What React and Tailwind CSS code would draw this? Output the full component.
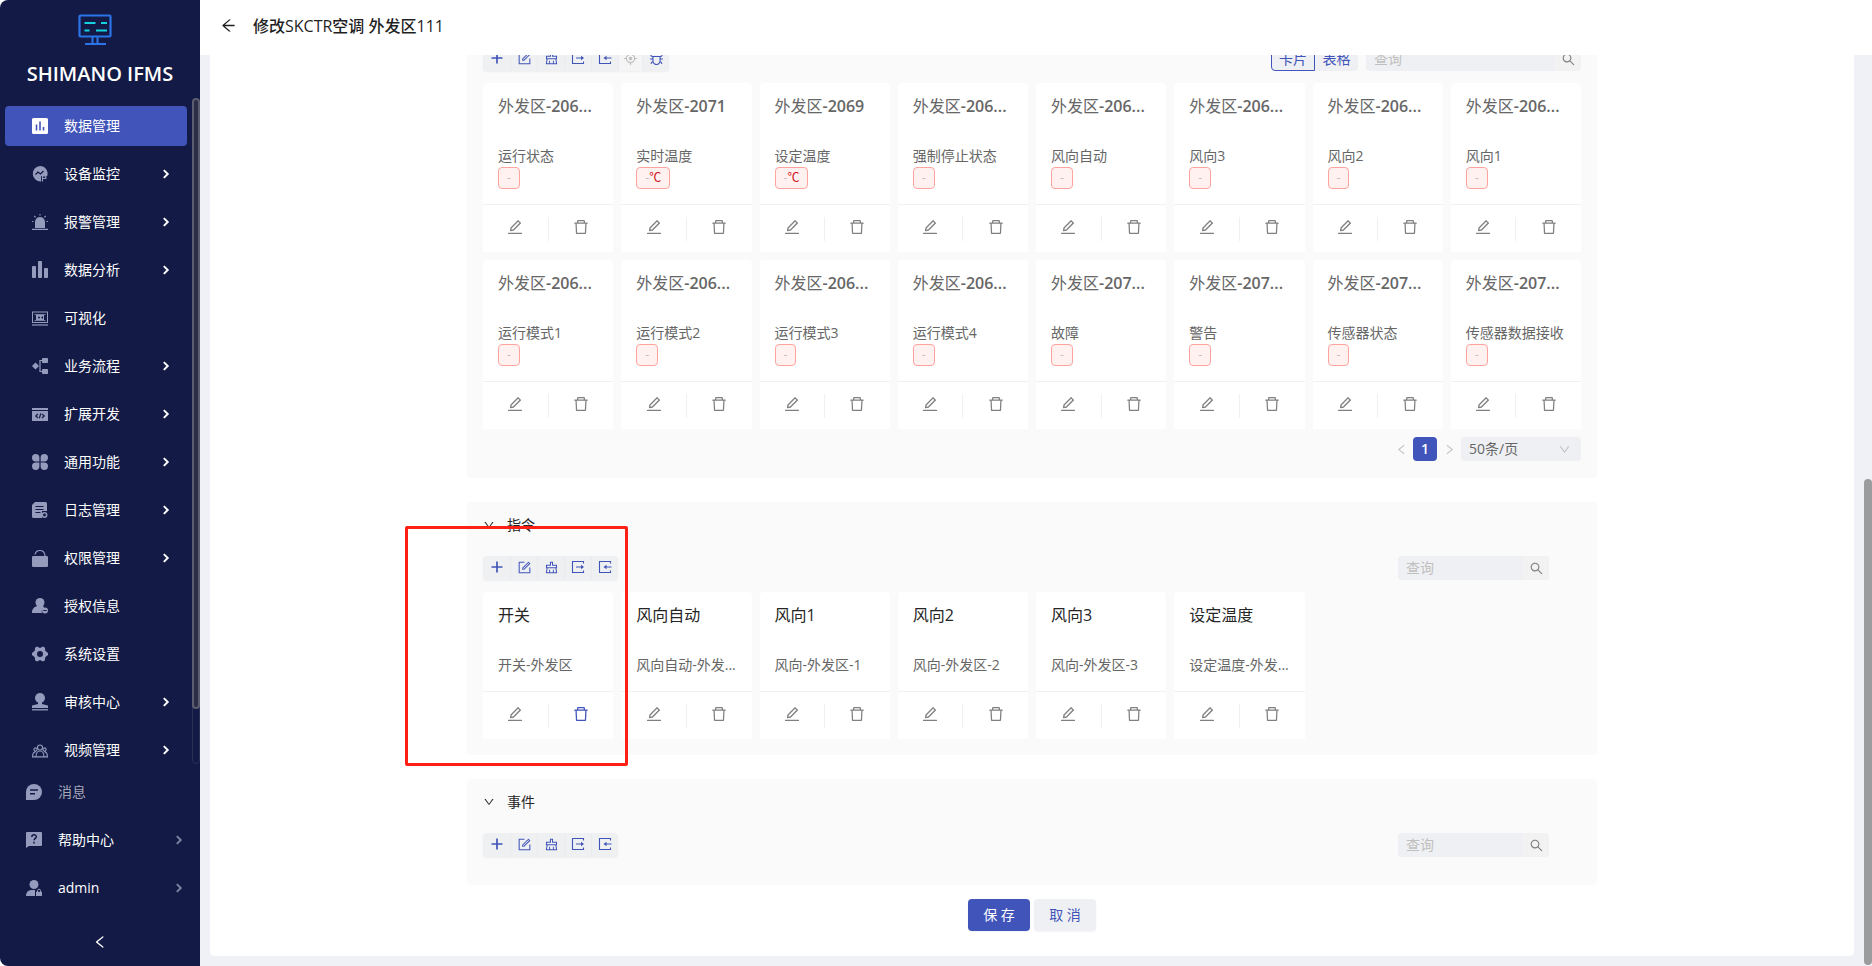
import React from 'react';
import {
  AiOutlineAim,
  AiOutlineArrowLeft,
  AiOutlineBug,
  AiOutlineClear,
  AiOutlineDelete,
  AiOutlineDown,
  AiOutlineEdit,
  AiOutlineForm,
  AiOutlineLeft,
  AiOutlineRight,
  AiOutlineSearch,
} from 'react-icons/ai';

const Icon = ({ children, className = 'size-4' }) => (
  <svg viewBox="0 0 16 16" className={`shrink-0 ${className}`} fill="currentColor" aria-hidden="true">
    {children}
  </svg>
);

const PlusIcon = () => (
  <svg viewBox="0 0 14 14" className="size-3.5" stroke="currentColor" strokeWidth="1.700" aria-hidden="true">
    <path d="M7 1.500v11M1.500 7h11" />
  </svg>
);

const ExportIcon = () => (
  <svg viewBox="0 0 14 14" className="size-3.5" fill="none" stroke="currentColor" aria-hidden="true">
    <path d="M12.500 3.500v-2h-11v11h11v-2" strokeWidth="1.100" />
    <path d="M5 7h6" />
    <path d="M10 4.800 13 7l-3 2.200z" fill="currentColor" stroke="none" />
  </svg>
);

const ImportIcon = () => (
  <svg viewBox="0 0 14 14" className="size-3.5" fill="none" stroke="currentColor" aria-hidden="true">
    <path d="M12.500 3.500v-2h-11v11h11v-2" strokeWidth="1.100" />
    <path d="M7.500 7h6" />
    <path d="M8.500 4.800 5.500 7l3 2.200z" fill="currentColor" stroke="none" />
  </svg>
);

const DARK = '#121a45';

const icons = {
  data: (
    <>
      <rect width="16" height="16" rx="1.5" />
      <path d="M4.500 6.500v6M8 3.500v9M11.500 9v3.500" stroke="#4154b9" strokeWidth="1.600" />
    </>
  ),
  monitor: (
    <>
      <path d="M8 0a7.500 7.500 0 1 0 1 15.400V10h6.200A7.600 7.600 0 0 0 8 0z" />
      <path d="M3.500 8.500 6 6l2.500 2 3-3" stroke={DARK} strokeWidth="1.300" fill="none" />
      <path d="M10.500 15.500V9.800h3.300v2.700h-3" stroke="currentColor" strokeWidth="1.200" fill="none" />
    </>
  ),
  alarm: (
    <>
      <path d="M3 14V8a5 5 0 0 1 10 0v6z" />
      <path d="M0 15.400h16M8 0v1.600M2.300 2l1.300 1.300M13.700 2l-1.300 1.300M0 7.500h1.500M14.500 7.500H16" stroke="currentColor" strokeWidth="1.100" />
    </>
  ),
  analysis: (
    <>
      <rect x="0" y="4" width="4" height="12" rx=".8" />
      <rect x="6" y="-1" width="4" height="17" rx=".8" />
      <rect x="12" y="6" width="4" height="10" rx=".8" />
    </>
  ),
  visual: (
    <>
      <rect x=".5" y="2" width="15" height="10.500" fill="none" stroke="currentColor" />
      <path d="M0 15h16" stroke="currentColor" strokeWidth="1.200" />
      <path d="M2.500 4.500h11M2.500 10.500h11" stroke="currentColor" strokeWidth=".8" />
      <rect x="4" y="5" width="8" height="5" />
      <circle cx="7" cy="7.500" r="1" fill={DARK} />
      <path d="m11 6-2 1.500L11 9z" fill={DARK} />
    </>
  ),
  flow: (
    <>
      <path d="M0 8l3.500-3.500L7 8l-3.500 3.500z" />
      <path d="M11 2.500H8v11h3" stroke="currentColor" strokeWidth="1.200" fill="none" />
      <rect x="10" y="0" width="6" height="5" rx=".8" />
      <rect x="10" y="11" width="6" height="5" rx=".8" />
    </>
  ),
  dev: (
    <>
      <rect y="2" width="16" height="2" />
      <rect y="5" width="16" height="10" />
      <path d="M6 7.800 3.800 10 6 12M10 7.800l2.200 2.200L10 12M8.800 7.500l-1.500 4.700" stroke={DARK} fill="none" strokeWidth="1.200" />
    </>
  ),
  common: (
    <>
      <path d="M3.700 0a3.700 3.700 0 0 1 3.700 3.700v3.700H3.700a3.700 3.700 0 0 1 0-7.400z" />
      <path d="M12.300 0a3.700 3.700 0 0 1 0 7.400H8.600V3.700A3.700 3.700 0 0 1 12.300 0z" />
      <path d="M3.700 16a3.700 3.700 0 0 1 0-7.400h3.700v3.700A3.700 3.700 0 0 1 3.700 16z" />
      <path d="M12.300 16a3.700 3.700 0 0 1-3.700-3.700V8.600h3.700a3.700 3.700 0 0 1 0 7.400z" />
    </>
  ),
  log: (
    <>
      <path d="M3 0h10.500A1.500 1.500 0 0 1 15 1.500V9H10v7H1.500A1.500 1.500 0 0 1 0 14.500V3z" />
      <path d="M3.500 4.500h8M3.500 7.500h8M3.500 10.500h5" stroke={DARK} strokeWidth="1.100" />
      <circle cx="12.500" cy="13" r="2.200" fill="none" stroke="currentColor" strokeWidth="1.500" />
    </>
  ),
  lock: (
    <>
      <rect y="6" width="16" height="11" rx="1.200" />
      <path d="M3 4.500a5 5 0 0 1 9.800 0V6" fill="none" stroke="currentColor" strokeWidth="1.200" />
    </>
  ),
  license: (
    <>
      <circle cx="8" cy="4.500" r="4.500" />
      <path d="M5 7h6l1 3a4 4 0 0 0-2 5H0c0-4 2-6 5-7z" />
      <circle cx="13" cy="12.500" r="3" />
      <path d="M11.300 12.500h3.400" stroke={DARK} />
    </>
  ),
  settings: (
    <path
      fillRule="evenodd"
      d="M5 .5 8 2l3-1.500 2 1.300.2 3L16 7v2l-2.800 2.200-.2 3-2 1.300L8 14l-3 1.500-2-1.300-.200-3L0 9V7l2.800-2.200.2-3zM8 5a3 3 0 1 0 0 6 3 3 0 0 0 0-6z"
    />
  ),
  audit: (
    <>
      <circle cx="8" cy="4" r="5" />
      <path d="M6 7h4v3l6 1.500V14H0v-2.500L6 10z" />
      <path d="M0 15.800h16" stroke="currentColor" strokeWidth="1.300" />
    </>
  ),
  video: (
    <g fill="none" stroke="currentColor" strokeWidth="1.100">
      <circle cx="8" cy="5.500" r="2.500" />
      <circle cx="3.500" cy="7.500" r="1.600" />
      <circle cx="12.500" cy="7.500" r="1.600" />
      <path d="M4 15c0-4 1.500-6 4-6s4 2 4 6zM.600 14.400c0-3 1-4.400 3-4.800M15.400 14.400c0-3-1-4.400-3-4.800M0 14.900h16" />
    </g>
  ),
  message: (
    <>
      <path d="M8 0a8 8 0 1 1 0 16H0V8a8 8 0 0 1 8-8z" />
      <path d="M4 6h8M4 9.800h5" stroke={DARK} strokeWidth="1.400" />
    </>
  ),
  help: (
    <>
      <path d="M1 0h14a1 1 0 0 1 1 1v12a1 1 0 0 1-1 1H3l-3 2V1a1 1 0 0 1 1-1z" />
      <path d="M5.800 5c0-3 4.500-2.800 4.500-.3 0 1.800-2.200 1.700-2.200 3.600M8 9.800v1.700" fill="none" stroke={DARK} strokeWidth="1.500" />
    </>
  ),
  user: (
    <>
      <circle cx="8" cy="4.500" r="4.500" />
      <path d="M0 16c0-4 2.500-6 6-6h3v6z" />
      <path d="M10 11.800h6V16h-6z" />
      <path d="M11.500 12v-1.300a1.500 1.500 0 0 1 3 0V12" fill="none" stroke="currentColor" />
    </>
  ),
  chevron: <path d="M5.500 3.500 10 8l-4.500 4.500" fill="none" stroke="currentColor" strokeWidth="2.200" />,
};

const menu = [
  { icon: 'data', label: '数据管理', active: true },
  { icon: 'monitor', label: '设备监控', sub: true },
  { icon: 'alarm', label: '报警管理', sub: true },
  { icon: 'analysis', label: '数据分析', sub: true },
  { icon: 'visual', label: '可视化' },
  { icon: 'flow', label: '业务流程', sub: true },
  { icon: 'dev', label: '扩展开发', sub: true },
  { icon: 'common', label: '通用功能', sub: true },
  { icon: 'log', label: '日志管理', sub: true },
  { icon: 'lock', label: '权限管理', sub: true },
  { icon: 'license', label: '授权信息' },
  { icon: 'settings', label: '系统设置' },
  { icon: 'audit', label: '审核中心', sub: true },
  { icon: 'video', label: '视频管理', sub: true },
];

const footerMenu = [
  { icon: 'message', label: '消息', muted: true },
  { icon: 'help', label: '帮助中心', sub: true },
  { icon: 'user', label: 'admin', sub: true },
];

const points = [
  ['外发区-206...', '运行状态'],
  ['外发区-2071', '实时温度', '℃'],
  ['外发区-2069', '设定温度', '℃'],
  ['外发区-206...', '强制停止状态'],
  ['外发区-206...', '风向自动'],
  ['外发区-206...', '风向3'],
  ['外发区-206...', '风向2'],
  ['外发区-206...', '风向1'],
  ['外发区-206...', '运行模式1'],
  ['外发区-206...', '运行模式2'],
  ['外发区-206...', '运行模式3'],
  ['外发区-206...', '运行模式4'],
  ['外发区-207...', '故障'],
  ['外发区-207...', '警告'],
  ['外发区-207...', '传感器状态'],
  ['外发区-207...', '传感器数据接收'],
];

const commands = [
  ['开关', '开关-外发区'],
  ['风向自动', '风向自动-外发...'],
  ['风向1', '风向-外发区-1'],
  ['风向2', '风向-外发区-2'],
  ['风向3', '风向-外发区-3'],
  ['设定温度', '设定温度-外发...'],
];

const Logo = () => (
  <svg viewBox="0 0 34 32" className="h-8 w-[34px]" fill="none" aria-hidden="true">
    <rect x="1.500" y="1.500" width="31" height="21" rx="1" stroke="#2b74e8" strokeWidth="2.200" />
    <path d="M14.500 23v6M19.500 23v6M7 30h21" stroke="#2b74e8" strokeWidth="2" />
    <path d="M6.500 9h11M23 9h6M6.500 16.500h5M18 16.500h11" stroke="#14d3de" strokeWidth="2.200" />
  </svg>
);

const Sidebar = () => (
  <aside className="flex w-[200px] shrink-0 flex-col overflow-hidden rounded-l-lg bg-[#121a45] text-sm text-white">
    <div className="flex h-[98px] shrink-0 flex-col items-center pt-3.5">
      <div className="pr-2.5">
        <Logo />
      </div>
      <h1 className="mt-3 text-xl leading-8 font-semibold whitespace-nowrap">SHIMANO IFMS</h1>
    </div>
    <div className="flex min-h-0 flex-1">
      <nav className="flex min-w-0 flex-1 flex-col gap-2 overflow-hidden px-[5px] pt-2">
        {menu.map(({ icon, label, active, sub }) => (
          <a
            key={label}
            href="#"
            className={`flex h-10 shrink-0 items-center rounded pr-3.5 pl-[27px] ${active ? 'bg-[#4154b9]' : ''}`}
          >
            <span className={active ? 'text-white' : 'text-[#949bbd]'}>
              <Icon className="size-4 overflow-visible">{icons[icon]}</Icon>
            </span>
            <span className="ml-4 flex-1">{label}</span>
            {sub && <Icon className="size-3.5">{icons.chevron}</Icon>}
          </a>
        ))}
      </nav>
      <div className="w-2 shrink-0 rounded border border-[#2b3157]">
        <div className="-mx-px -mt-px h-[92%] rounded border-2 border-[#5c5d6e] bg-[#2a2d45]"></div>
      </div>
    </div>
    <nav className="mt-1 shrink-0">
      {footerMenu.map(({ icon, label, sub, muted }) => (
        <a key={label} href="#" className="flex h-12 items-center pr-3.5 pl-[26px]">
          <span className="text-[#949bbd]">
            <Icon>{icons[icon]}</Icon>
          </span>
          <span className={`ml-4 flex-1 ${muted ? 'text-[#a5a8b8]' : ''}`}>{label}</span>
          {sub && <Icon className="size-3.5 text-[#80859f]">{icons.chevron}</Icon>}
        </a>
      ))}
    </nav>
    <button type="button" aria-label="收起" className="flex h-[54px] shrink-0 items-center justify-center pt-1.5">
      <AiOutlineLeft size={16} />
    </button>
  </aside>
);

const baseTools = [
  { name: '新增', Glyph: PlusIcon },
  { name: '编辑', Glyph: AiOutlineForm },
  { name: '清空', Glyph: AiOutlineClear },
  { name: '导出', Glyph: ExportIcon },
  { name: '导入', Glyph: ImportIcon },
];

const pointTools = [
  ...baseTools,
  { name: '定位', Glyph: AiOutlineAim, disabled: true },
  { name: '调试', Glyph: AiOutlineBug },
];

const Toolbar = ({ tools }) => (
  <div className="flex h-6 rounded bg-[#eff0f2] shadow-xs">
    {tools.map(({ name, Glyph, disabled }, i) => (
      <button
        key={name}
        type="button"
        aria-label={name}
        disabled={disabled}
        className={`flex items-center justify-center pb-0.5 ${i ? 'border-l border-[#eaebee]' : ''} ${
          disabled ? 'w-6 bg-[#f5f5f5] text-[#bfbfbf]' : 'w-[27px] text-[#4154b9]'
        }`}
      >
        <Glyph size={15} />
      </button>
    ))}
  </div>
);

const SearchBox = ({ className }) => (
  <div className={`flex h-6 rounded bg-[#eff0f3] ${className}`}>
    <input
      type="text"
      placeholder="查询"
      aria-label="查询"
      className="min-w-0 flex-1 bg-transparent px-2 text-sm leading-6 placeholder:text-[#bfbfbf]"
    />
    <button
      type="button"
      aria-label="搜索"
      className="flex w-[26px] items-center justify-center rounded-r bg-[#f2f2f3] text-[#808080]"
    >
      <AiOutlineSearch size={15} />
    </button>
  </div>
);

const CardActions = ({ highlight }) => (
  <div className="flex h-12 items-center divide-x divide-[#f0f0f0] border-t border-[#f0f0f0] text-[#808080]">
    <button type="button" aria-label="编辑" className="flex h-6 flex-1 items-center justify-center pb-1">
      <AiOutlineEdit size={18} />
    </button>
    <button
      type="button"
      aria-label="删除"
      className={`flex h-6 flex-1 items-center justify-center pb-1 ${highlight ? 'text-[#4154b9]' : ''}`}
    >
      <AiOutlineDelete size={18} />
    </button>
  </div>
);

const PointCard = ({ title, label, unit }) => (
  <article className="overflow-hidden rounded-t bg-white">
    <div className="px-[15px] pt-[11px] pb-[15px] whitespace-nowrap">
      <h3 className="text-base leading-6 font-semibold text-[#666]">
        <span className="font-normal">{title.slice(0, 3)}</span>
        {title.slice(3)}
      </h3>
      <p className="mt-[27px] text-sm leading-[22px] text-[#666]">{label}</p>
      <span className="flex h-[22px] w-fit items-center rounded border border-[#ffa39e] bg-[#fff1f0] px-2 text-xs text-[#cf1322]">
        <span className="text-[#bfbfbf]">-</span>
        {unit}
      </span>
    </div>
    <CardActions />
  </article>
);

const CommandCard = ({ title, desc, highlight }) => (
  <article className="overflow-hidden rounded-t bg-white">
    <div className="px-[15px] pt-[11px] pb-[15px] whitespace-nowrap">
      <h3 className="text-base leading-6 text-[#262626]">{title}</h3>
      <p className="mt-[27px] text-sm leading-[22px] text-[#666]">{desc}</p>
    </div>
    <CardActions highlight={highlight} />
  </article>
);

const PanelTitle = ({ children }) => (
  <h2 className="mb-5 flex items-center gap-3 pt-3 text-sm leading-[22px] text-[#262626]">
    <AiOutlineDown size={12} />
    {children}
  </h2>
);

const PointPanel = () => (
  <section className="rounded bg-[#fafafa] px-4 pt-14 pb-[17px]">
    <div className="mb-3 flex items-center justify-between">
      <Toolbar tools={pointTools} />
      <div className="flex gap-2">
        <div className="flex h-6 text-sm leading-[22px] text-[#4154b9]">
          <button type="button" className="w-11 rounded-l border border-[#4154b9] bg-[#eff0f3]">
            卡片
          </button>
          <button type="button" className="w-[43px] rounded-r bg-[#eff0f3]">
            表格
          </button>
        </div>
        <SearchBox className="w-[215px]" />
      </div>
    </div>
    <div className="grid grid-cols-8 gap-2">
      {points.map(([title, label, unit], i) => (
        <PointCard key={i} title={title} label={label} unit={unit} />
      ))}
    </div>
    <div className="mt-2 flex items-center justify-end text-sm text-[#666]">
      <button type="button" aria-label="上一页" className="flex w-6 justify-center text-[#bfbfbf]">
        <AiOutlineLeft size={13} />
      </button>
      <button type="button" className="size-6 rounded bg-[#4154b9] font-semibold text-white">
        1
      </button>
      <button type="button" aria-label="下一页" className="flex w-6 justify-center text-[#bfbfbf]">
        <AiOutlineRight size={13} />
      </button>
      <div className="relative h-6 w-[120px]">
        <select
          aria-label="每页条数"
          className="h-6 w-full appearance-none rounded bg-[#eff0f3] px-2 text-sm leading-6"
        >
          <option>50条/页</option>
        </select>
        <AiOutlineDown size={13} className="pointer-events-none absolute top-1.5 right-2.5 text-[#bfbfbf]" />
      </div>
    </div>
  </section>
);

const CommandPanel = () => (
  <section className="relative rounded bg-[#fafafa] px-4 pb-4">
    <PanelTitle>指令</PanelTitle>
    <div className="mb-3 flex justify-between">
      <Toolbar tools={baseTools} />
      <SearchBox className="mr-8 w-[151px]" />
    </div>
    <div className="grid grid-cols-8 gap-2">
      {commands.map(([title, desc], i) => (
        <CommandCard key={title} title={title} desc={desc} highlight={i === 0} />
      ))}
    </div>
    {/* marker around the first command */}
    <div className="pointer-events-none absolute top-6 -left-[62px] h-60 w-[223px] rounded-xs border-3 border-[#ff2015]"></div>
  </section>
);

const EventPanel = () => (
  <section className="rounded bg-[#fafafa] px-4 pb-7">
    <PanelTitle>事件</PanelTitle>
    <div className="flex justify-between">
      <Toolbar tools={baseTools} />
      <SearchBox className="mr-8 w-[151px]" />
    </div>
  </section>
);

const App = () => {
  return (
    <div className="flex h-screen overflow-hidden bg-white font-['Open_Sans','Noto_Sans_CJK_SC',sans-serif]">
      <Sidebar />
      <div className="flex min-w-0 flex-1 flex-col">
        <header className="flex h-[55px] shrink-0 items-center gap-4 bg-white px-5 pb-1 text-[#1f1f1f]">
          <button type="button" aria-label="返回">
            <AiOutlineArrowLeft size={17} />
          </button>
          <h2 className="text-base font-medium">修改SKCTR空调 外发区111</h2>
        </header>
        <div className="flex min-h-0 flex-1 bg-[#f0f1f6]">
          <main className="mr-2.5 mb-2.5 ml-2.5 flex min-w-0 flex-1 flex-col justify-end overflow-hidden rounded-b bg-white">
            <form className="mx-auto flex w-full max-w-[1130px] flex-col gap-6 pb-[25px]">
              <PointPanel />
              <CommandPanel />
              <EventPanel />
              <div className="-mt-2.5 flex justify-center gap-1 text-sm">
                <button type="button" className="h-8 w-[62px] rounded bg-[#4154b9] text-white shadow-xs">
                  保 存
                </button>
                <button type="button" className="h-8 w-[62px] rounded bg-[#eff0f3] text-[#4154b9] shadow-xs">
                  取 消
                </button>
              </div>
            </form>
          </main>
          <div className="flex w-2 shrink-0 flex-col justify-end pb-px">
            <div className="h-[53.400%] rounded bg-[#9b9c9e]"></div>
          </div>
        </div>
      </div>
    </div>
  );
};

export default App;
